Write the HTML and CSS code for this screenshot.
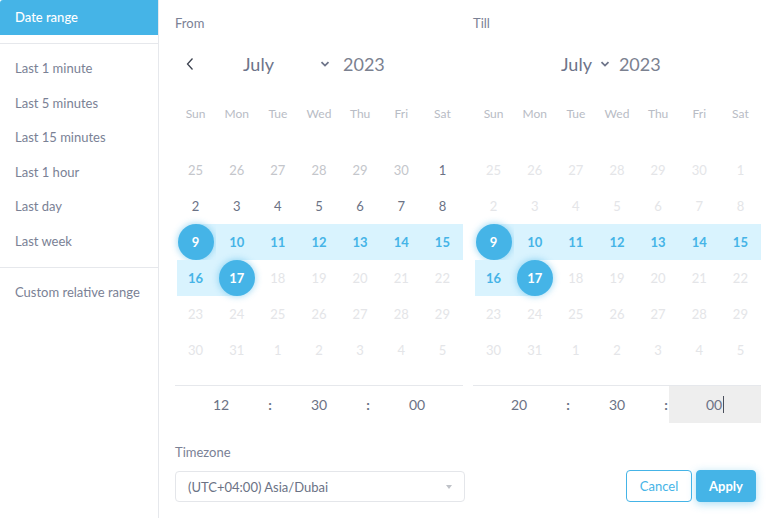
FILE: index.html
```html
<!DOCTYPE html>
<html lang="en">
<head>
<meta charset="utf-8">
<title>Date range picker</title>
<link rel="stylesheet" href="styles.css">
</head>
<body>
<div class="picker">
  <aside class="side">
    <div class="side-item active">Date range</div>
    <div class="sep"></div>
    <div class="side-list">
      <div class="side-item">Last 1 minute</div>
      <div class="side-item">Last 5 minutes</div>
      <div class="side-item">Last 15 minutes</div>
      <div class="side-item">Last 1 hour</div>
      <div class="side-item">Last day</div>
      <div class="side-item">Last week</div>
    </div>
    <div class="sep"></div>
    <div class="side-list">
      <div class="side-item">Custom relative range</div>
    </div>
  </aside>
  <main class="main">
    <div class="cals">
      <section class="cal">
        <div class="label">From</div>
        <div class="head head-from">
          <svg class="prev" width="10" height="14" viewBox="0 0 10 14"><path d="M7.5 1.5 L2.5 7 L7.5 12.5" fill="none" stroke="#3d4350" stroke-width="1.3"/></svg>
          <div class="month wide"><span>July</span><svg class="chev" width="10" height="6" viewBox="0 0 10 6"><path d="M1.5 1.2 L5 4.6 L8.5 1.2" fill="none" stroke="#6d7489" stroke-width="1.8"/></svg></div>
          <span class="year">2023</span>
        </div>
        <div class="weekdays"><span>Sun</span><span>Mon</span><span>Tue</span><span>Wed</span><span>Thu</span><span>Fri</span><span>Sat</span></div>
        <div class="days">
          <span class="d prev-m">25</span><span class="d prev-m">26</span><span class="d prev-m">27</span><span class="d prev-m">28</span><span class="d prev-m">29</span><span class="d prev-m">30</span><span class="d">1</span>
          <span class="d">2</span><span class="d">3</span><span class="d">4</span><span class="d">5</span><span class="d">6</span><span class="d">7</span><span class="d">8</span>
          <span class="d sel start"><b>9</b></span><span class="d rng">10</span><span class="d rng">11</span><span class="d rng">12</span><span class="d rng">13</span><span class="d rng">14</span><span class="d rng">15</span>
          <span class="d rng wstart">16</span><span class="d sel end"><b>17</b></span><span class="d off">18</span><span class="d off">19</span><span class="d off">20</span><span class="d off">21</span><span class="d off">22</span>
          <span class="d off">23</span><span class="d off">24</span><span class="d off">25</span><span class="d off">26</span><span class="d off">27</span><span class="d off">28</span><span class="d off">29</span>
          <span class="d off">30</span><span class="d off">31</span><span class="d off">1</span><span class="d off">2</span><span class="d off">3</span><span class="d off">4</span><span class="d off">5</span>
        </div>
        <div class="time">
          <span class="field">12</span><span class="colon">:</span><span class="field">30</span><span class="colon">:</span><span class="field">00</span>
        </div>
      </section>
      <section class="cal">
        <div class="label">Till</div>
        <div class="head head-till">
          <div class="month"><span>July</span><svg class="chev" width="10" height="6" viewBox="0 0 10 6"><path d="M1.5 1.2 L5 4.6 L8.5 1.2" fill="none" stroke="#6d7489" stroke-width="1.8"/></svg></div>
          <span class="year">2023</span>
        </div>
        <div class="weekdays"><span>Sun</span><span>Mon</span><span>Tue</span><span>Wed</span><span>Thu</span><span>Fri</span><span>Sat</span></div>
        <div class="days">
          <span class="d off">25</span><span class="d off">26</span><span class="d off">27</span><span class="d off">28</span><span class="d off">29</span><span class="d off">30</span><span class="d off">1</span>
          <span class="d off">2</span><span class="d off">3</span><span class="d off">4</span><span class="d off">5</span><span class="d off">6</span><span class="d off">7</span><span class="d off">8</span>
          <span class="d sel start"><b>9</b></span><span class="d rng">10</span><span class="d rng">11</span><span class="d rng">12</span><span class="d rng">13</span><span class="d rng">14</span><span class="d rng">15</span>
          <span class="d rng wstart">16</span><span class="d sel end"><b>17</b></span><span class="d off">18</span><span class="d off">19</span><span class="d off">20</span><span class="d off">21</span><span class="d off">22</span>
          <span class="d off">23</span><span class="d off">24</span><span class="d off">25</span><span class="d off">26</span><span class="d off">27</span><span class="d off">28</span><span class="d off">29</span>
          <span class="d off">30</span><span class="d off">31</span><span class="d off">1</span><span class="d off">2</span><span class="d off">3</span><span class="d off">4</span><span class="d off">5</span>
        </div>
        <div class="time">
          <span class="field">20</span><span class="colon">:</span><span class="field">30</span><span class="colon">:</span><span class="field focus">00<i class="caret"></i></span>
        </div>
      </section>
    </div>
    <div class="bottom">
      <div class="tz">
        <div class="label">Timezone</div>
        <div class="select"><span>(UTC+04:00) Asia/Dubai</span><i class="tri"></i></div>
      </div>
      <div class="actions">
        <button class="btn cancel">Cancel</button>
        <button class="btn apply">Apply</button>
      </div>
    </div>
  </main>
</div>
</body>
</html>
```

FILE: styles.css
```css
* { box-sizing: border-box; }
html, body { margin: 0; padding: 0; background: #fff; }
body { font-family: Lato, "Noto Sans", sans-serif; color: #6b7285; }

.picker {
  display: flex;
  width: 771px;
  height: 518px;
  background: #fff;
  border-radius: 3px;
  overflow: hidden;
}

.side {
  width: 159px;
  flex: none;
  border-right: 1px solid #e6e8ec;
}
.side-item {
  font-size: 13px;
  color: #7a8195;
  padding-left: 15px;
  height: 34.6px;
  line-height: 34.6px;
  white-space: nowrap;
}
.side-item.active {
  height: 35px;
  line-height: 35px;
  background: #45b4e7;
  color: #fff;
  font-weight: 500;
}
.sep { height: 1px; background: #e6e8ec; margin: 8px 0 7px; }
.side-list + .sep { margin-top: 8px; }

.main {
  flex: 1;
  padding: 15px 15px 0 16px;
  display: flex;
  flex-direction: column;
}
.cals { display: flex; gap: 10px; }
.cal { width: 288px; flex: none; }

.label { font-size: 13px; color: #7a8195; height: 16px; line-height: 16px; }

.head {
  height: 40px;
  margin-top: 13px;
  display: flex;
  align-items: center;
  font-size: 18px;
  color: #6d7489;
}
.head-from { padding-left: 10px; }
.prev { margin-right: 48px; }
.month { display: flex; align-items: center; gap: 8px; }
.month.wide { width: 90px; justify-content: space-between; padding-right: 3px; }
.head-from .year { margin-left: 10px; }
.head-till { padding-left: 88px; }
.head-till .year { margin-left: 9px; }
.year { color: #7b8190; }

.weekdays {
  margin-top: 15px;
  height: 28px;
  display: grid;
  grid-template-columns: repeat(7, 1fr);
  align-items: center;
  text-align: center;
  font-size: 12px;
  color: #b8bcc5;
}

.days {
  margin-top: 25px;
  display: grid;
  grid-template-columns: repeat(7, 1fr);
  grid-auto-rows: 36px;
}
.d {
  display: flex;
  align-items: center;
  justify-content: center;
  font-size: 13px;
  color: #6b7285;
}
.d.prev-m { color: #c4c6cb; }
.d.off { color: #e4e5e8; }
.d.rng { background: #d9f3fe; color: #45b4e7; font-weight: 700; }
.d.wstart { background: linear-gradient(to right, transparent 2px, #d9f3fe 2px); }
.d.start { background: linear-gradient(to right, transparent 50%, #d9f3fe 50%); }
.d.end { background: linear-gradient(to right, #d9f3fe 50%, transparent 50%); }
.d.sel b {
  width: 36px;
  height: 36px;
  border-radius: 50%;
  background: #45b4e7;
  color: #fff;
  font-weight: 700;
  display: flex;
  align-items: center;
  justify-content: center;
  box-shadow: 0 0 6px 1px rgba(69, 180, 231, 0.45);
}

.time {
  margin-top: 17px;
  border-top: 1px solid #e6e8ec;
  height: 38px;
  display: grid;
  grid-template-columns: 1fr 6px 1fr 6px 1fr;
}
.field {
  display: flex;
  align-items: center;
  justify-content: center;
  font-size: 14px;
  color: #6b7285;
}
.field.focus { background: #eeeeee; }
.caret { display: inline-block; width: 1px; height: 17px; background: #4a4f5c; margin-left: 1px; }
.colon {
  display: flex;
  align-items: center;
  justify-content: center;
  font-size: 14px;
  font-weight: 700;
  color: #6b7285;
}

.bottom {
  margin-top: 21px;
  display: flex;
  justify-content: space-between;
  align-items: flex-end;
}
.tz .label { margin-bottom: 11px; }
.select {
  width: 290px;
  height: 31px;
  border: 1px solid #e4e6ea;
  border-radius: 4px;
  display: flex;
  align-items: center;
  justify-content: space-between;
  padding: 0 12px 0 12px;
  font-size: 13px;
  color: #6b7285;
}
.tri {
  width: 0; height: 0;
  border-left: 3.5px solid transparent;
  border-right: 3.5px solid transparent;
  border-top: 4px solid #bfc2c8;
}
.actions { display: flex; gap: 4px; padding-right: 5px; }
.btn {
  height: 32px;
  border-radius: 4px;
  font-family: Lato, "Noto Sans", sans-serif;
  font-size: 13px;
  padding: 0;
  cursor: pointer;
}
.cancel { width: 66px; background: #fff; border: 1px solid #45b4e7; color: #45b4e7; }
.apply {
  width: 60px;
  background: #45b4e7;
  border: 1px solid #45b4e7;
  color: #fff;
  font-weight: 700;
  box-shadow: 0 2px 8px rgba(69, 180, 231, 0.45);
}
```
